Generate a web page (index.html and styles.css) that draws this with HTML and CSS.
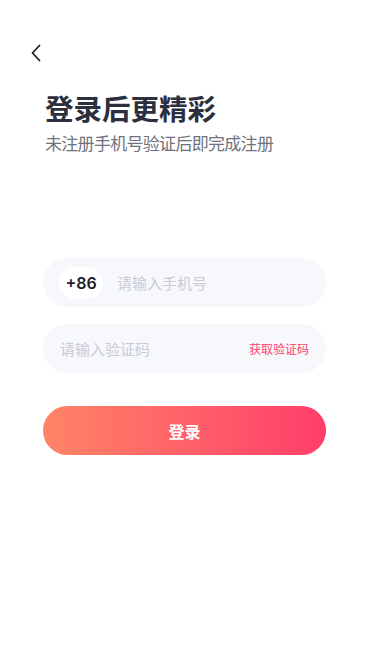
FILE: index.html
```html
<!doctype html>
<html lang="zh-CN">
<head>
    <meta charset="UTF-8">
    <meta name="viewport" content="width=device-width, initial-scale=1.0">
    <title>登录</title>
    <link rel="stylesheet" href="styles.css">
</head>
<body>
<div class="page">
    <div class="top-bar">
        <a class="back" href="#">
            <svg width="12" height="18" viewBox="0 0 12 18">
                <path d="M9.5 1.5 L2.5 9 L9.5 16.5" fill="none" stroke="#1f2029" stroke-width="1.8" stroke-linecap="round" stroke-linejoin="round"/>
            </svg>
        </a>
    </div>

    <div class="form">
        <h1 class="title">登录后更精彩</h1>
        <p class="subtitle">未注册手机号验证后即完成注册</p>

        <div class="fields">
            <div class="field">
                <span class="code">+86</span>
                <input type="text" class="phone" placeholder="请输入手机号">
            </div>
            <div class="field field-sms">
                <input type="text" class="sms" placeholder="请输入验证码">
                <span class="get-code">获取验证码</span>
            </div>
        </div>

        <button class="login" type="button">登录</button>
    </div>
</div>
</body>
</html>
```

FILE: styles.css
```css
body {
    margin: 0;
    padding: 0;
    background: #ffffff;
    font-family: "Noto Sans CJK SC", "Noto Sans", sans-serif;
}

.page {
    width: 369px;
    min-height: 656px;
}

.top-bar {
    padding: 44px 0 0 30px;
    height: 18px;
}

.back {
    display: block;
    width: 12px;
    height: 18px;
}

.back svg {
    display: block;
}

.form {
    padding: 0 43px;
}

.title {
    margin: 28px 0 0 2px;
    font-size: 28.5px;
    line-height: 36px;
    font-weight: 700;
    color: #2c2f3d;
}

.subtitle {
    margin: 5px 0 0 2px;
    font-size: 17px;
    line-height: 24px;
    letter-spacing: -0.7px;
    color: #70727d;
}

.fields {
    display: flex;
    flex-direction: column;
    gap: 17px;
    margin-top: 103px;
}

.field {
    display: flex;
    align-items: center;
    height: 49px;
    border-radius: 25px;
    background: #f7f8fc;
    padding: 0 17px 0 16px;
}

.code {
    display: flex;
    align-items: center;
    justify-content: center;
    width: 44px;
    height: 32px;
    border-radius: 16px;
    background: #ffffff;
    font-family: Inter, "Noto Sans", sans-serif;
    font-size: 16px;
    font-weight: 600;
    color: #1b1c2a;
}

input {
    flex: 1;
    min-width: 0;
    border: none;
    outline: none;
    background: transparent;
    padding: 0;
    font-family: "Noto Sans CJK SC", sans-serif;
    font-size: 15px;
    color: #2c2f3d;
}

input::placeholder {
    color: #c9cad6;
}

.phone {
    margin-left: 14px;
}

.sms {
    margin-left: 1px;
}

.get-code {
    font-size: 12px;
    color: #ff3f6c;
}

.login {
    display: block;
    width: 100%;
    height: 49px;
    margin-top: 33px;
    border: none;
    border-radius: 25px;
    background: linear-gradient(90deg, #ff8566, #ff3e6b);
    font-family: "Noto Sans CJK SC", sans-serif;
    font-size: 16px;
    font-weight: 700;
    color: #ffffff;
}
```
